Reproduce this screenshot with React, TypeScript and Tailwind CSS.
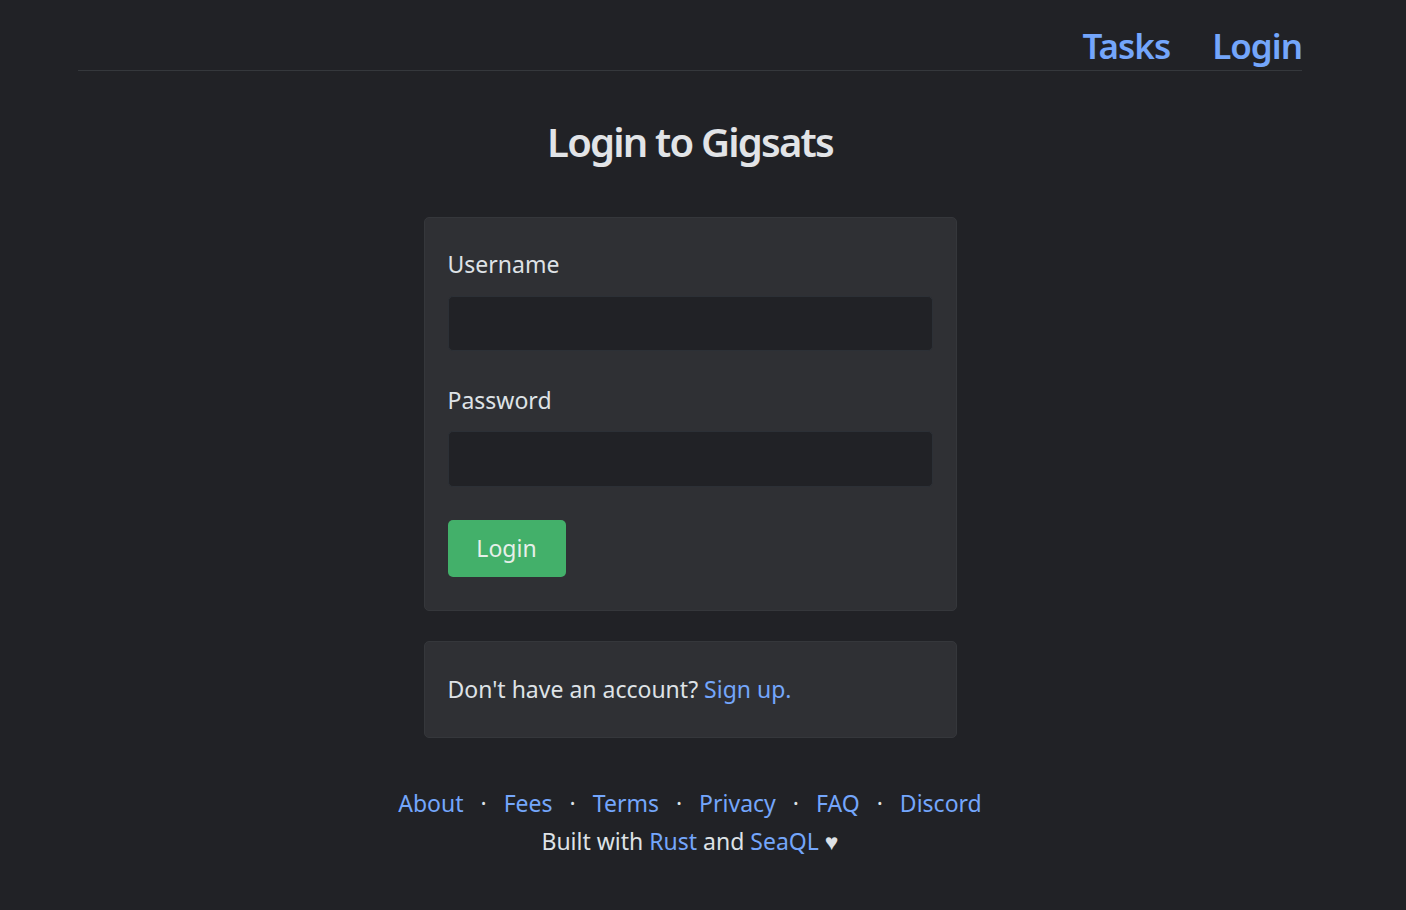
import React from "react";

export default function App() {
  const links = ["About", "Fees", "Terms", "Privacy", "FAQ", "Discord"];
  return (
    <div
      className="min-h-screen w-full bg-[#212226] text-[#dee2e6]"
      style={{ fontFamily: '"Noto Sans", "Open Sans", sans-serif' }}
    >
      <div className="w-[1380px]">
        <header className="w-[1224px] mx-auto flex justify-end gap-[42px] pt-[24px] pb-[3px] border-b border-[#35383c]">
          <a className="text-[35px] leading-[43px] font-semibold tracking-[-1px] text-[#74a6fb]">Tasks</a>
          <a className="text-[35px] leading-[43px] font-semibold tracking-[-1px] text-[#74a6fb]">Login</a>
        </header>

        <h1 className="mt-[47px] text-center text-[40px] leading-[48px] font-semibold tracking-[-1.8px] text-[#e2e4e7]">
          Login to Gigsats
        </h1>

        <div className="w-[533px] mx-auto mt-[51px] rounded-[5px] bg-[#2f3034] border border-[#35373b] px-[23px] pt-[29px] pb-[33px]">
          <label className="block text-[23px] leading-[34px] mb-[15px]">Username</label>
          <div className="h-[55px] rounded-[5px] bg-[#212226] border border-[#2c3036]" />
          <label className="block text-[23px] leading-[34px] mt-[32px] mb-[14px]">Password</label>
          <div className="h-[56px] rounded-[5px] bg-[#212226] border border-[#2c3036]" />
          <button className="mt-[33px] w-[118px] h-[57px] rounded-[5px] bg-[#43b06a] text-[23px] text-[#e6efe9]">
            Login
          </button>
        </div>

        <div className="w-[533px] mx-auto mt-[30px] rounded-[5px] bg-[#2f3034] border border-[#35373b] px-[23px] pt-[30px] pb-[31px]">
          <p className="text-[23px] leading-[34px]">
            Don't have an account? <a className="text-[#74a6fb]">Sign up.</a>
          </p>
        </div>

        <footer className="mt-[47px] text-[23px] leading-[37px] text-center">
          <div className="flex justify-center">
            {links.map((l, i) => (
              <React.Fragment key={l}>
                {i > 0 && <span className="mx-[17px]">·</span>}
                <a className="text-[#74a6fb]">{l}</a>
              </React.Fragment>
            ))}
          </div>
          <div className="mt-[1px]">
            Built with <a className="text-[#74a6fb]">Rust</a> and{" "}
            <a className="text-[#74a6fb]">SeaQL</a> ♥
          </div>
        </footer>
      </div>
    </div>
  );
}
